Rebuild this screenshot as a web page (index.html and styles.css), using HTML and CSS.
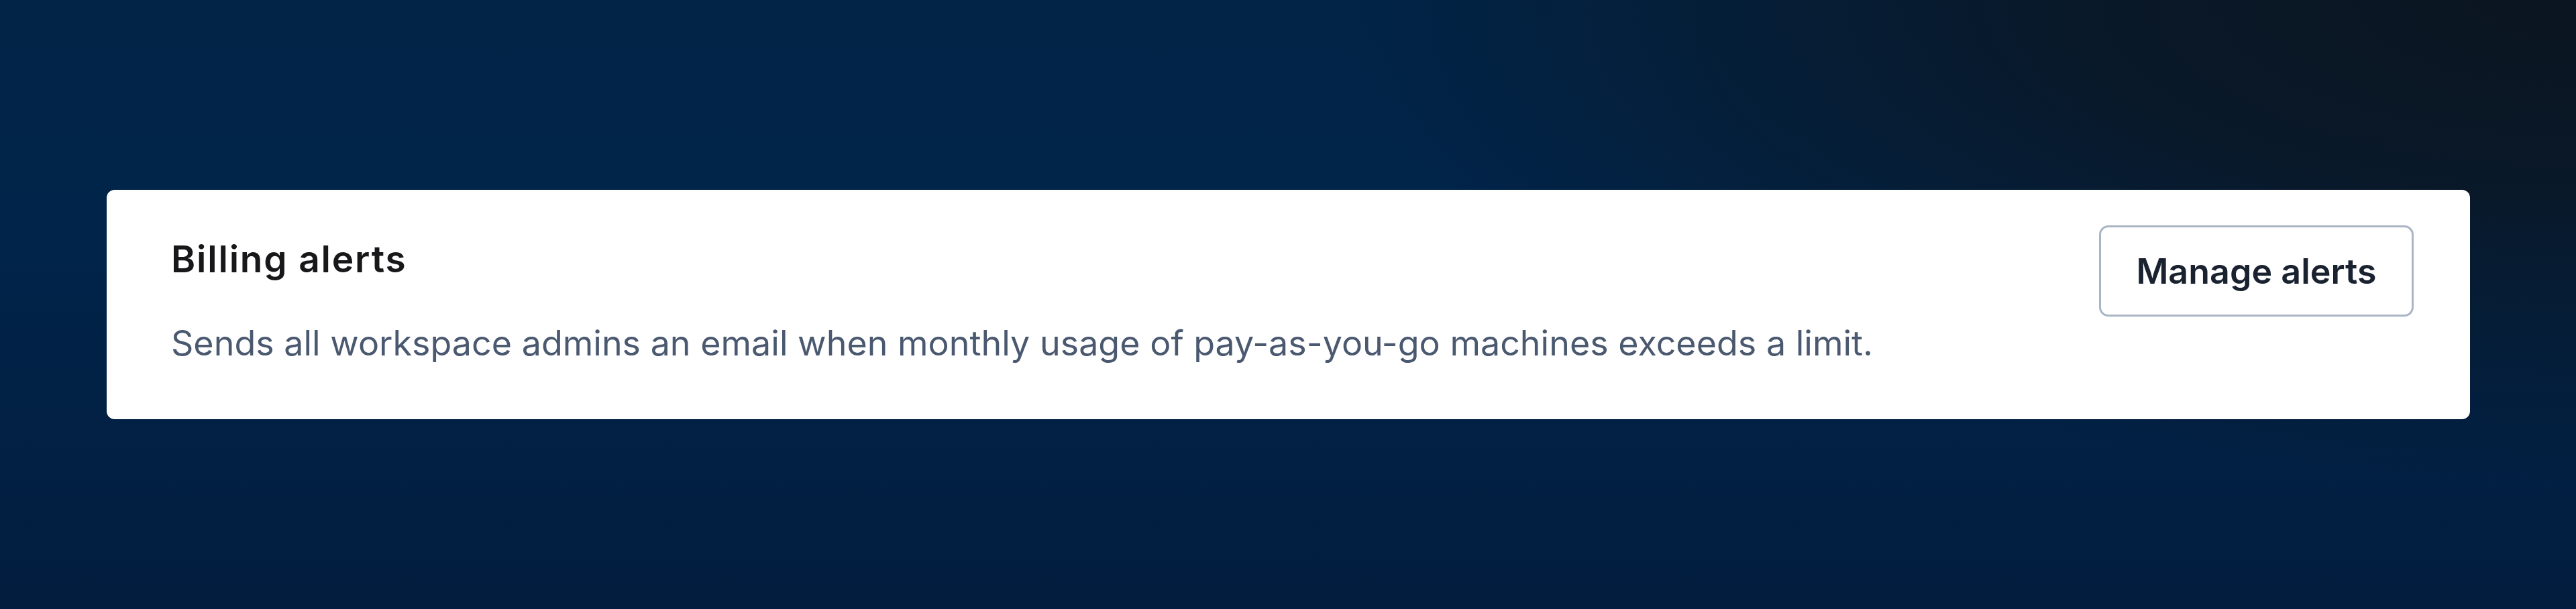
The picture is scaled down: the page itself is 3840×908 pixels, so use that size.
FILE: index.html
```html
<!DOCTYPE html>
<html lang="en">
<head>
<meta charset="utf-8">
<title>Billing alerts</title>
<link rel="stylesheet" href="styles.css">
</head>
<body>
<main class="stage">
  <section class="card">
    <div class="card-text">
      <h2 class="card-title">Billing alerts</h2>
      <p class="card-desc">Sends all workspace admins an email when monthly usage of pay-as-you-go machines exceeds a limit.</p>
    </div>
    <button class="btn" type="button">Manage alerts</button>
  </section>
</main>
</body>
</html>
```

FILE: styles.css
```css
html, body {
  margin: 0;
  padding: 0;
  height: 908px;
}
body {
  font-family: Inter, "Noto Sans", "Liberation Sans", sans-serif;
  background:
    radial-gradient(ellipse 2300px 900px at 100% 0%, #0b1520 0%, rgba(11, 21, 32, 0.8) 30%, rgba(11, 21, 32, 0) 80%),
    linear-gradient(180deg, #012447 0%, #01244a 40%, #021d3e 100%);
}
.stage {
  height: 908px;
  box-sizing: border-box;
  padding: 0 158px 0 159px;
  display: flex;
  align-items: center;
}
.card {
  flex: 1;
  height: 342px;
  box-sizing: border-box;
  background: #ffffff;
  border-radius: 12px;
  padding: 53px 84px 0 96px;
  display: flex;
  align-items: flex-start;
  justify-content: space-between;
}
.card-text {
  padding-top: 17px;
}
.card-title {
  margin: 0;
  font-size: 55px;
  line-height: 66px;
  letter-spacing: 1.8px;
  font-weight: 600;
  color: #18181b;
}
.card-desc {
  margin: 61px 0 0;
  font-size: 52px;
  line-height: 63px;
  font-weight: 400;
  color: #4a596f;
}
.btn {
  font-family: inherit;
  width: 469px;
  height: 136px;
  box-sizing: border-box;
  background: #ffffff;
  border: 3px solid #a9b5c5;
  border-radius: 14px;
  font-size: 52px;
  font-weight: 600;
  color: #1a2230;
  cursor: pointer;
}
```
